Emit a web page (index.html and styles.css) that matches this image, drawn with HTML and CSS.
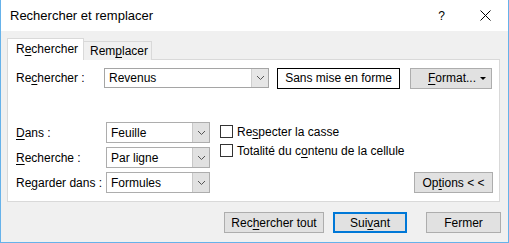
FILE: index.html
```html
<!DOCTYPE html>
<html lang="fr">
<head>
<meta charset="utf-8">
<title>Rechercher et remplacer</title>
<link rel="stylesheet" href="styles.css">
</head>
<body>
<div class="window">
  <div class="titlebar">
    <span class="title">Rechercher et remplacer</span>
    <span class="help">?</span>
    <svg class="close" width="11" height="11" viewBox="0 0 11 11"><path d="M0.5 0.5 L10.5 10.5 M10.5 0.5 L0.5 10.5" stroke="#000" stroke-width="1" fill="none"/></svg>
  </div>
  <div class="content">
    <div class="tabs">
      <div class="tab active">R<u>e</u>chercher</div>
      <div class="tab">Rem<u>p</u>lacer</div>
    </div>
    <div class="panel">
      <div class="row1">
        <label class="lbl lbl1">Re<u>c</u>hercher :</label>
        <div class="combo">
          <span class="combo-val">Revenus</span>
          <span class="dd"><svg width="7" height="4" viewBox="0 0 7 4"><polyline points="0,0 3.5,3.5 7,0" fill="none" stroke="#555" stroke-width="1"/></svg></span>
        </div>
        <div class="btn preview">Sans mise en forme</div>
        <div class="btn format"><span><u>F</u>ormat...</span><span class="tri"></span></div>
      </div>
      <div class="lower">
        <div class="fields">
          <label class="lbl"><u>D</u>ans :</label>
          <div class="select"><span class="sel-val">Feuille</span><span class="dd"><svg width="7" height="4" viewBox="0 0 7 4"><polyline points="0,0 3.5,3.5 7,0" fill="none" stroke="#555" stroke-width="1"/></svg></span></div>
          <label class="lbl"><u>R</u>echerche :</label>
          <div class="select"><span class="sel-val">Par ligne</span><span class="dd"><svg width="7" height="4" viewBox="0 0 7 4"><polyline points="0,0 3.5,3.5 7,0" fill="none" stroke="#555" stroke-width="1"/></svg></span></div>
          <label class="lbl">Re<u>g</u>arder dans :</label>
          <div class="select"><span class="sel-val">Formules</span><span class="dd"><svg width="7" height="4" viewBox="0 0 7 4"><polyline points="0,0 3.5,3.5 7,0" fill="none" stroke="#555" stroke-width="1"/></svg></span></div>
        </div>
        <div class="opts">
          <div class="checks">
            <div class="check"><span class="box"></span><span>Re<u>s</u>pecter la casse</span></div>
            <div class="check"><span class="box"></span><span>Totalité du c<u>o</u>ntenu de la cellule</span></div>
          </div>
          <div class="btn options">Op<u>t</u>ions &lt; &lt;</div>
        </div>
      </div>
    </div>
    <div class="actions">
      <div class="btn act findall">Rec<u>h</u>ercher tout</div>
      <div class="btn act next">Sui<u>v</u>ant</div>
      <div class="btn act close-btn">Fermer</div>
    </div>
  </div>
</div>
</body>
</html>
```
FILE: styles.css
```css
* { box-sizing: border-box; }
html, body { margin: 0; padding: 0; background: #fff; }
body {
  font-family: "Liberation Sans", "DejaVu Sans", sans-serif;
  font-size: 12px;
  color: #000;
}
u { text-decoration: underline; text-underline-offset: 2px; }
.window {
  width: 509px;
  height: 243px;
  border: 1px solid #66b2ea;
  border-top: none;
  display: flex;
  flex-direction: column;
  background: #f0f0f0;
}
.titlebar {
  height: 31px;
  background: #fff;
  display: flex;
  align-items: center;
  padding-left: 9px;
  flex-shrink: 0;
}
.title { font-size: 13px; flex: 1; }
.help { font-size: 12px; margin-right: 35px; }
.close { margin-right: 17px; }
.content {
  flex: 1;
  padding: 7px 7px 0 6px;
  display: flex;
  flex-direction: column;
}
.tabs {
  display: flex;
  align-items: flex-end;
  margin-bottom: -1px;
  position: relative;
  z-index: 1;
  height: 22px;
}
.tab {
  height: 19px;
  width: 68px;
  border: 1px solid #d9d9d9;
  border-left: none;
  border-bottom: none;
  background: #f0f0f0;
  display: flex;
  align-items: center;
  padding-left: 6px;
}
.tab.active {
  height: 22px;
  width: 77px;
  border-left: 1px solid #d9d9d9;
  background: #fff;
  padding-left: 8px;
  padding-bottom: 2px;
}
.panel {
  width: 493px;
  height: 143px;
  border: 1px solid #d9d9d9;
  background: #fff;
  padding: 8px 7px 0 8px;
}
.row1 {
  display: flex;
  align-items: center;
  height: 20px;
}
.lbl { display: flex; align-items: center; }
.lbl1 { width: 88px; }
.combo {
  width: 165px;
  height: 20px;
  border: 1px solid #a5a5a5;
  display: flex;
  align-items: stretch;
}
.combo-val { flex: 1; padding-left: 4px; display: flex; align-items: center; }
.dd {
  width: 17px;
  background: #e6e6e6;
  border-left: 1px solid #cfcfcf;
  display: flex;
  align-items: center;
  justify-content: center;
}
.btn {
  background: #e1e1e1;
  border: 1px solid #adadad;
  display: flex;
  align-items: center;
  justify-content: center;
}
.preview {
  margin-left: 8px;
  width: 123px;
  height: 21px;
  background: #fff;
  border: 1px solid #000;
}
.format {
  margin-left: 10px;
  width: 82px;
  height: 21px;
  justify-content: space-between;
  padding: 0 5px 0 17px;
}
.tri {
  width: 0; height: 0;
  border-left: 3px solid transparent;
  border-right: 3px solid transparent;
  border-top: 3px solid #000;
}
.lower {
  display: flex;
  margin-top: 34px;
}
.fields {
  display: grid;
  grid-template-columns: 90px 104px;
  grid-auto-rows: 21px;
  row-gap: 4px;
}
.select {
  border: 1px solid #adadad;
  display: flex;
  align-items: stretch;
}
.sel-val { flex: 1; padding-left: 4px; display: flex; align-items: center; }
.select .dd { width: 17px; background: #e1e1e1; border-left: 1px solid #c8c8c8; }
.opts {
  flex: 1;
  margin-left: 10px;
  display: flex;
  flex-direction: column;
  justify-content: space-between;
  align-items: stretch;
}
.checks { display: flex; flex-direction: column; }
.check {
  display: flex;
  align-items: center;
  height: 19px;
}
.box {
  width: 13px;
  height: 13px;
  border: 1px solid #333;
  background: #fff;
  margin-right: 4px;
}
.options {
  align-self: flex-end;
  width: 79px;
  height: 21px;
  margin-right: -1px;
}
.actions {
  display: flex;
  justify-content: flex-end;
  margin-top: 10px;
  padding-right: 0px;
}
.act { height: 21px; }
.findall { width: 100px; margin-right: 9px; }
.next { width: 74px; margin-right: 19px; border: 2px solid #0078d7; }
.close-btn { width: 75px; }
```
